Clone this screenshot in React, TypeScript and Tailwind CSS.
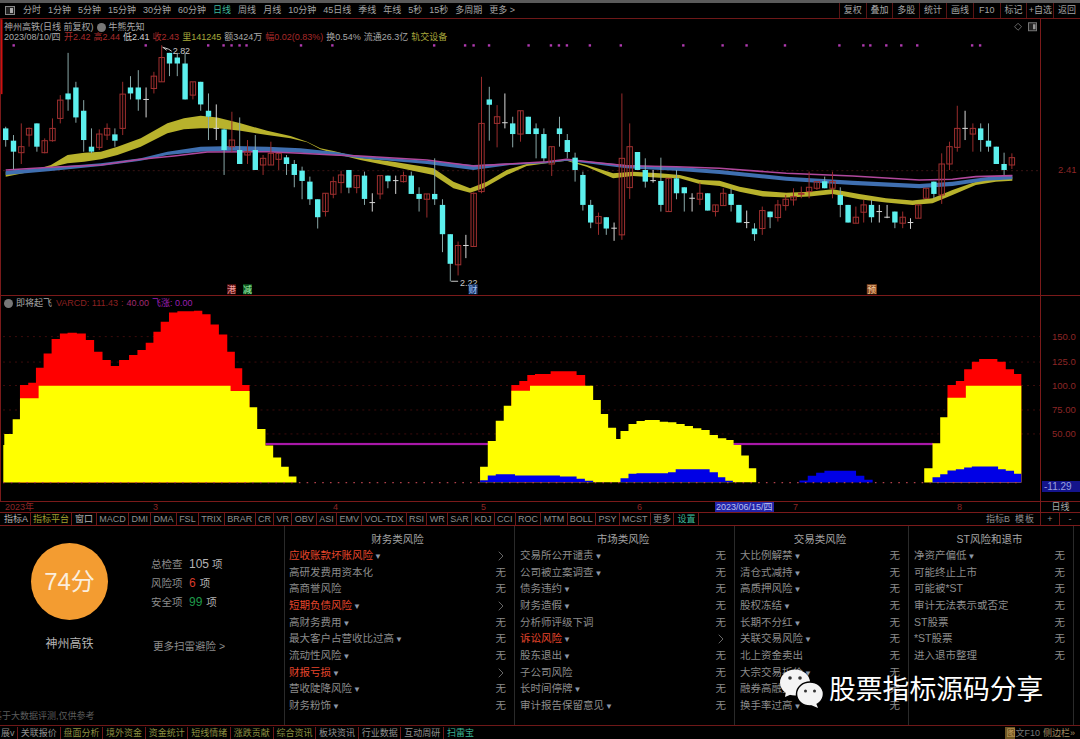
import { ChevronRight } from "lucide-react";

type Candle = [number, number, number, number, "r" | "c" | "w"];
type Point = [number, number];

// read off the chart in 3x crop coordinates, converted when drawn
const candlesLeft: Candle[] = [
  [260, 265, 300, 320, "c"], [285, 302, 335, 388, "c"], [250, 320, 338, 372, "r"], [262, 265, 285, 320, "r"],
  [250, 250, 320, 335, "c"], [295, 302, 338, 340, "r"], [235, 265, 302, 305, "r"], [165, 180, 235, 250, "r"],
  [38, 160, 178, 212, "c"], [125, 142, 232, 248, "c"], [180, 212, 300, 335, "c"], [265, 320, 335, 340, "c"],
  [268, 282, 322, 330, "r"], [250, 265, 285, 300, "r"], [265, 283, 302, 320, "c"], [125, 162, 265, 285, "r"],
  [108, 142, 160, 178, "c"], [90, 142, 178, 212, "c"], [142, 178, 180, 232, "w"], [95, 108, 145, 160, "r"],
  [15, 52, 125, 125, "r"], [38, 38, 70, 108, "c"], [38, 52, 70, 108, "c"], [40, 70, 178, 178, "c"],
  [125, 125, 165, 178, "r"], [125, 125, 193, 212, "c"], [160, 212, 230, 300, "c"], [193, 265, 267, 300, "w"],
  [265, 268, 330, 405, "c"], [215, 300, 320, 335, "r"], [232, 330, 372, 372, "c"], [300, 335, 345, 372, "r"],
  [285, 330, 390, 390, "c"], [345, 355, 375, 405, "r"], [305, 340, 375, 375, "r"], [340, 340, 358, 390, "r"],
  [345, 352, 372, 405, "c"], [360, 372, 405, 442, "c"], [380, 392, 423, 478, "c"], [410, 425, 478, 495, "c"],
  [478, 478, 532, 566, "c"], [460, 460, 515, 530, "r"], [410, 425, 463, 475, "r"], [392, 405, 428, 460, "r"],
  [390, 390, 443, 460, "c"], [405, 407, 443, 460, "r"],
];

const candlesMid: Candle[] = [
  [335, 347, 417, 435, "c"], [400, 428, 430, 455, "w"], [347, 347, 402, 418, "r"], [347, 347, 364, 385, "c"],
  [347, 362, 365, 402, "w"], [335, 347, 365, 368, "r"], [335, 347, 402, 402, "c"], [382, 402, 417, 455, "c"],
  [402, 402, 418, 473, "r"], [295, 402, 418, 435, "c"], [418, 435, 523, 577, "c"], [523, 523, 612, 665, "c"],
  [545, 557, 615, 647, "r"], [525, 557, 560, 595, "w"], [398, 400, 560, 560, "r"], [50, 190, 395, 400, "r"],
  [80, 118, 134, 242, "c"], [135, 170, 190, 262, "r"], [100, 188, 190, 205, "w"], [170, 190, 222, 262, "c"],
  [152, 152, 222, 245, "r"], [170, 170, 222, 222, "c"], [190, 205, 222, 295, "c"], [205, 222, 295, 305, "c"],
  [260, 260, 312, 348, "r"], [170, 205, 222, 260, "c"], [222, 240, 276, 295, "c"], [278, 293, 330, 365, "c"],
  [335, 345, 435, 452, "c"], [420, 435, 488, 505, "c"], [458, 470, 490, 525, "r"], [472, 472, 506, 525, "c"],
  [488, 505, 508, 543, "w"], [100, 295, 525, 540, "r"], [190, 260, 383, 417, "r"], [276, 276, 330, 330, "c"],
  [295, 330, 365, 383, "c"], [330, 362, 365, 368, "w"], [293, 363, 435, 455, "c"], [355, 355, 455, 455, "r"],
  [330, 355, 400, 418, "c"], [382, 382, 400, 455, "c"], [400, 415, 417, 455, "w"], [368, 400, 418, 435, "r"],
  [400, 400, 452, 452, "c"], [435, 435, 455, 470, "r"],
  [385, 400, 437, 437, "r"], [385, 402, 435, 455, "c"], [435, 435, 488, 488, "c"], [452, 488, 490, 505, "w"],
  [490, 506, 523, 543, "c"], [440, 452, 506, 525, "r"], [455, 455, 472, 505, "c"], [420, 435, 473, 485, "r"],
  [405, 418, 437, 452, "r"], [385, 410, 420, 437, "r"], [380, 400, 402, 415, "r"], [335, 382, 395, 415, "r"],
  [365, 365, 385, 390, "r"], [350, 364, 385, 385, "c"], [335, 365, 385, 415, "r"], [382, 405, 435, 472, "c"],
  [435, 435, 488, 488, "c"], [440, 472, 490, 490, "r"], [420, 435, 457, 488, "r"], [420, 435, 472, 488, "c"],
  [435, 455, 457, 488, "w"], [435, 472, 474, 475, "w"], [455, 455, 488, 505, "c"], [455, 472, 490, 505, "r"],
  [475, 488, 490, 507, "w"], [435, 435, 475, 475, "r"], [385, 385, 415, 415, "r"], [365, 365, 402, 415, "c"],
  [280, 312, 405, 432, "r"], [245, 260, 312, 330, "r"], [137, 205, 262, 275, "r"], [152, 205, 207, 240, "w"],
  [190, 205, 222, 275, "r"], [190, 205, 240, 275, "c"], [190, 242, 260, 275, "c"], [260, 260, 312, 312, "c"],
  [278, 312, 330, 345, "c"], [280, 293, 315, 327, "r"],
];

const candles = [
  ...candlesLeft.map((c) => [c, 40] as const),
  ...candlesMid.map((c) => [c, 60] as const),
];

const yellowTop: Point[] = [
  ...toPage(0, 40, [[14, 395], [100, 390], [150, 375], [200, 345], [250, 338], [300, 335], [350, 320], [420, 295], [500, 250], [550, 235], [600, 227], [650, 232], [720, 250], [800, 272], [870, 288], [920, 305], [960, 325], [1000, 333]]),
  ...toPage(360, 60, [[0, 293], [100, 305], [220, 325], [280, 365], [330, 385], [380, 365], [440, 330], [500, 312], [560, 305], [620, 300], [680, 315], [760, 340], [820, 335], [900, 340], [960, 345], [1020, 360]]),
  ...toPage(720, 60, [[0, 362], [60, 380], [130, 393], [200, 398], [270, 395], [340, 388], [420, 402], [500, 415], [580, 422], [640, 415], [700, 390], [770, 365], [830, 355], [880, 350]]),
];
const yellowBottom: Point[] = [
  ...toPage(0, 40, [[14, 410], [100, 393], [150, 382], [200, 370], [250, 365], [300, 358], [350, 345], [420, 320], [500, 280], [550, 268], [600, 265], [650, 265], [720, 272], [800, 285], [870, 295], [920, 307], [960, 328], [1000, 340]]),
  ...toPage(360, 60, [[0, 300], [100, 320], [220, 345], [280, 385], [330, 398], [370, 385], [440, 345], [500, 318], [560, 310], [620, 302], [680, 320], [760, 355], [820, 348], [900, 353], [960, 355], [1020, 372]]),
  ...toPage(720, 60, [[0, 378], [60, 395], [130, 410], [200, 413], [270, 410], [340, 402], [420, 418], [500, 428], [580, 435], [640, 430], [700, 405], [770, 375], [830, 365], [880, 362]]),
];
const blueTop: Point[] = [
  ...toPage(0, 40, [[14, 392], [150, 382], [300, 370], [420, 355], [500, 335], [600, 320], [700, 318], [800, 320], [900, 325], [1000, 335]]),
  ...toPage(360, 60, [[0, 288], [200, 302], [340, 315], [450, 310], [560, 305], [620, 298], [700, 305], [800, 315], [950, 320]]),
  ...toPage(720, 60, [[0, 330], [200, 350], [400, 362], [600, 372], [700, 365], [800, 352], [880, 345]]),
];
const blueBottom: Point[] = [
  ...toPage(0, 40, [[14, 405], [150, 393], [300, 378], [420, 362], [500, 345], [600, 335], [700, 332], [800, 335], [900, 338], [1000, 345]]),
  ...toPage(360, 60, [[0, 295], [200, 312], [340, 330], [450, 315], [560, 310], [620, 302], [700, 312], [800, 325], [950, 332]]),
  ...toPage(720, 60, [[0, 342], [200, 362], [400, 375], [600, 385], [700, 378], [800, 362], [880, 358]]),
];
const magentaLine: Point[] = [
  ...toPage(0, 40, [[14, 390], [150, 382], [300, 375], [420, 358], [520, 348], [620, 336], [800, 335], [900, 340], [1000, 345]]),
  ...toPage(360, 60, [[0, 288], [200, 300], [340, 318], [560, 305], [620, 298], [700, 307], [800, 317], [950, 320]]),
  ...toPage(720, 60, [[0, 325], [200, 340], [400, 348], [600, 360], [700, 358], [770, 350], [880, 347]]),
];

const dots = [12.7, 145, 207.6, 223, 231, 239, 246, 300.6, 332, 434, 465, 473.5, 489, 528.6, 551, 559, 567, 590, 621, 683.6, 723, 747, 785.5, 840, 864, 871, 887, 902, 918, 973, 981];

const hills: { x0: number; y0: number; base: number; color: string; end: number; steps: Point[] }[] = [
  { x0: 0, y0: 290, base: 578, color: "#ff0000", end: 747, steps: [[57, 285], [82, 278], [105, 233], [128, 190], [152, 147], [177, 130], [200, 128], [228, 130], [255, 150], [280, 185], [305, 210], [330, 228], [355, 210], [385, 195], [410, 180], [435, 158], [458, 125], [480, 95], [505, 67], [530, 63], [580, 62], [605, 72], [630, 103], [655, 133], [680, 185], [703, 235], [725, 285]] },
  { x0: 0, y0: 290, base: 578, color: "#ffff00", end: 888, steps: [[7, 465], [10, 432], [35, 388], [57, 325], [113, 287], [690, 303], [747, 352], [770, 417], [795, 467], [818, 503], [842, 531], [865, 560]] },
  { x0: 460, y0: 350, base: 397, color: "#ff0000", end: 376, steps: [[154, 105], [178, 93], [202, 75], [225, 72], [272, 64], [350, 75]] },
  { x0: 460, y0: 350, base: 397, color: "#ffff00", end: 890, steps: [[60, 351], [83, 273], [107, 212], [131, 167], [154, 122], [210, 107], [400, 150], [423, 192], [445, 233], [469, 267], [482, 243], [506, 222], [530, 213], [555, 210], [600, 215], [625, 217], [650, 222], [675, 228], [700, 235], [725, 240], [750, 255], [775, 265], [800, 270], [822, 285], [845, 317], [868, 355]] },
  { x0: 460, y0: 350, base: 397, color: "#0000e6", end: 400, steps: [[60, 391], [83, 377], [107, 373], [165, 377], [300, 380], [350, 387], [375, 393]] },
  { x0: 460, y0: 350, base: 397, color: "#0000e6", end: 820, steps: [[482, 385], [506, 372], [530, 370], [625, 367], [648, 358], [750, 367], [775, 382], [797, 393]] },
  { x0: 800, y0: 290, base: 578, color: "#0000e6", end: 220, steps: [[0, 572], [25, 558], [50, 549], [75, 543], [170, 558], [195, 570]] },
  { x0: 800, y0: 290, base: 578, color: "#ff0000", end: 667, steps: [[445, 285], [470, 273], [495, 238], [518, 215], [540, 207], [595, 215], [620, 238], [645, 252]] },
  { x0: 800, y0: 290, base: 578, color: "#ffff00", end: 667, steps: [[375, 535], [400, 460], [423, 382], [445, 323], [500, 287]] },
  { x0: 800, y0: 290, base: 578, color: "#0000e6", end: 667, steps: [[400, 562], [423, 553], [445, 542], [470, 538], [495, 533], [518, 530], [597, 538], [620, 543], [645, 552]] },
];

const periods = ["分时", "1分钟", "5分钟", "15分钟", "30分钟", "60分钟", "日线", "周线", "月线", "10分钟", "45日线", "季线", "年线", "5秒", "15秒", "多周期", "更多 >"];
const actions = ["复权", "叠加", "多股", "统计", "画线", "F10", "标记", "+自选", "返回"];
const indicatorTabs = ["MACD", "DMI", "DMA", "FSL", "TRIX", "BRAR", "CR", "VR", "OBV", "ASI", "EMV", "VOL-TDX", "RSI", "WR", "SAR", "KDJ", "CCI", "ROC", "MTM", "BOLL", "PSY", "MCST", "更多"];
const bottomTabs = ["关联报价", "盘面分析", "境外资金", "资金统计", "短线情绪", "涨跌贡献", "综合资讯", "板块资讯", "行业数据", "互动周研"];

type Risk = { name: string; more?: boolean; hit?: boolean };

const riskColumns: { title: string; width: string; items: Risk[] }[] = [
  {
    title: "财务类风险",
    width: "w-[230px] pl-[4px]",
    items: [
      { name: "应收账款坏账风险", more: true, hit: true },
      { name: "高研发费用资本化" },
      { name: "高商誉风险" },
      { name: "短期负债风险", more: true, hit: true },
      { name: "高财务费用", more: true },
      { name: "最大客户占营收比过高", more: true },
      { name: "流动性风险", more: true },
      { name: "财报亏损", more: true, hit: true },
      { name: "营收陡降风险", more: true },
      { name: "财务粉饰", more: true },
    ],
  },
  {
    title: "市场类风险",
    width: "w-[220px] pl-[5px]",
    items: [
      { name: "交易所公开谴责", more: true },
      { name: "公司被立案调查", more: true },
      { name: "债务违约", more: true },
      { name: "财务造假", more: true },
      { name: "分析师评级下调" },
      { name: "诉讼风险", more: true, hit: true },
      { name: "股东退出", more: true },
      { name: "子公司风险" },
      { name: "长时间停牌", more: true },
      { name: "审计报告保留意见", more: true },
    ],
  },
  {
    title: "交易类风险",
    width: "w-[174px] pl-[5px]",
    items: [
      { name: "大比例解禁", more: true },
      { name: "清仓式减持", more: true },
      { name: "高质押风险", more: true },
      { name: "股权冻结", more: true },
      { name: "长期不分红", more: true },
      { name: "关联交易风险", more: true },
      { name: "北上资金卖出" },
      { name: "大宗交易折价", more: true },
      { name: "融券高融资", more: true },
      { name: "换手率过高", more: true },
    ],
  },
  {
    title: "ST风险和退市",
    width: "w-[165px] pl-[5px]",
    items: [
      { name: "净资产偏低", more: true },
      { name: "可能终止上市" },
      { name: "可能被*ST" },
      { name: "审计无法表示或否定" },
      { name: "ST股票" },
      { name: "*ST股票" },
      { name: "进入退市整理" },
    ],
  },
];

function toPage(x0: number, y0: number, points: Point[]): Point[] {
  return points.map(([x, y]) => [x0 + x / 3, y0 + y / 3]);
}

function band(top: Point[], bottom: Point[]) {
  return [...top, ...[...bottom].reverse()].map(([x, y]) => `${x.toFixed(1)},${y.toFixed(1)}`).join(" ");
}

function line(points: Point[]) {
  return points.map(([x, y]) => `${x.toFixed(1)},${y.toFixed(1)}`).join(" ");
}

function hillPath(hill: (typeof hills)[number]) {
  const px = (x: number) => (hill.x0 + x / 3).toFixed(1);
  const py = (y: number) => (hill.y0 + y / 3).toFixed(1);
  let d = `M${px(hill.steps[0][0])} ${py(hill.base)}`;
  hill.steps.forEach(([x, y], index) => {
    const next = index + 1 < hill.steps.length ? hill.steps[index + 1][0] : hill.end;
    d += `L${px(x)} ${py(y)}L${px(next)} ${py(y)}`;
  });
  return `${d}L${px(hill.end)} ${py(hill.base)}Z`;
}

function PriceChart() {
  return (
    <svg viewBox="0 19 1041 276" className="absolute inset-0 h-full w-full">
      <rect x="0" y="19" width="1.5" height="75" fill="#d01010" />
      <line x1="2" x2="1041" y1="170.7" y2="170.7" stroke="#3a1414" strokeDasharray="2 3" />
      {dots.map((x) => (
        <rect key={x} x={x - 1.2} y="44" width="2.4" height="2.4" fill="#b03ab0" />
      ))}
      <polygon points={band(yellowTop, yellowBottom)} fill="#b8b22c" />
      <polygon points={band(blueTop, blueBottom)} fill="#3f6fb0" />
      <polyline points={line(magentaLine)} fill="none" stroke="#b0489c" strokeWidth="1.6" />
      {candles.map(([[high, top, bottom, low, kind], y0], index) => {
        const x = 4.7 + 7.815 * index;
        const wick = kind === "r" ? "#9a2c2c" : kind === "c" ? "#8aa8a8" : "#d8d8d8";
        const y = (value: number) => y0 + value / 3;
        return (
          <g key={index}>
            <line x1={x} x2={x} y1={y(high)} y2={y(low)} stroke={wick} strokeWidth="1" />
            {kind === "w" ? (
              <line x1={x - 2.8} x2={x + 2.8} y1={y(top)} y2={y(top)} stroke={wick} />
            ) : (
              <rect
                x={x - 2.7}
                y={y(top)}
                width="5.4"
                height={Math.max((bottom - top) / 3, 1)}
                fill={kind === "c" ? "#5cf0ee" : "#000000"}
                stroke={kind === "c" ? "none" : "#a03030"}
                fillOpacity={kind === "c" ? 1 : 0}
              />
            )}
          </g>
        );
      })}
      <polyline points="166,50 162,47 168,49 171,51" fill="none" stroke="#c8c8c8" />
      <text x="172" y="54" fontSize="9" fill="#c8c8c8">2.82</text>
      <line x1="451" x2="458" y1="281.5" y2="281.5" stroke="#c8c8c8" />
      <text x="460" y="286" fontSize="9" fill="#c8c8c8">2.22</text>
      <rect x="226.5" y="284.5" width="9" height="10" fill="#5a1010" />
      <text x="231" y="293" fontSize="9" fill="#f0a0a0" textAnchor="middle">港</text>
      <rect x="242.5" y="284.5" width="9" height="10" fill="#105a20" />
      <text x="247" y="293" fontSize="9" fill="#a0f0b0" textAnchor="middle">减</text>
      <rect x="468.5" y="284.5" width="9" height="10" fill="#1c3a70" />
      <text x="473" y="293" fontSize="9" fill="#a0c0f0" textAnchor="middle">财</text>
      <rect x="867.5" y="284.5" width="10" height="10" fill="#8a4a20" />
      <text x="872.5" y="293" fontSize="9" fill="#f8d0a0" textAnchor="middle">预</text>
      <path d="M1019 23l3.5 3.5-3.5 3.5-3.5-3.5z" fill="none" stroke="#666" />
      <rect x="1029.5" y="22.5" width="8" height="8" fill="#222" stroke="#777" />
      <rect x="1034" y="24" width="2.5" height="5" fill="#999" />
    </svg>
  );
}

function IndicatorChart() {
  return (
    <svg viewBox="0 296 1041 205" className="absolute inset-0 h-full w-full">
      {[336.5, 362, 385.5, 410, 434].map((y) => (
        <line key={y} x1="2" x2="1041" y1={y} y2={y} stroke="#3c0c0c" strokeDasharray="2 4" />
      ))}
      <rect x="265" y="443" width="669" height="2.2" fill="#a818a8" />
      {hills.map((hill, index) => (
        <path key={index} d={hillPath(hill)} fill={hill.color} />
      ))}
      <line x1="2" x2="1022" y1="482.7" y2="482.7" stroke="#b0404a" strokeWidth="1.2" strokeDasharray="1.6 6.2" />
    </svg>
  );
}

function Toolbar() {
  return (
    <div className="flex h-[16px] shrink-0 items-center border-b border-[#6e1818] text-[9px] leading-none text-[#a4a4a4]">
      <div className="ml-[5px] mr-[8px] flex h-[9px] w-[10px] justify-end border border-[#888] bg-[#222] p-px">
        <div className="w-[3px] bg-[#aaa]" />
      </div>
      <div className="flex items-center gap-[7px]">
        {periods.map((period) => (
          <span key={period} className={period === "日线" ? "text-[#3cb89a]" : ""}>
            {period}
          </span>
        ))}
      </div>
      <div className="ml-auto flex h-full">
        {actions.map((action) => (
          <span key={action} className="flex w-[26.8px] items-center justify-center border-l border-[#5a1414]">
            {action}
          </span>
        ))}
      </div>
    </div>
  );
}

function ChartHeader() {
  return (
    <div className="relative pl-[3px] pt-[3px] text-[9px] leading-[11px]">
      <div className="flex items-center text-[#a8a8a8]">
        <span>神州高铁(日线 前复权)</span>
        <span className="ml-[3px] mr-[3px] h-[9px] w-[9px] rounded-full bg-[#777]" />
        <span>牛熊先知</span>
      </div>
      <div className="mt-[-1px] flex gap-[3px] whitespace-nowrap text-[#a8a8a8]">
        <span className="w-[57px]">2023/08/10/四</span>
        <span className="text-[#a82a2a]">开2.42</span>
        <span className="text-[#a82a2a]">高2.44</span>
        <span className="text-[#d0d0d0]">低2.41</span>
        <span className="text-[#a82a2a]">收2.43</span>
        <span className="text-[#a8a83c]">里141245</span>
        <span>额3424万</span>
        <span className="text-[#a82a2a]">幅0.02(0.83%)</span>
        <span>换0.54%</span>
        <span>流通26.3亿</span>
        <span className="text-[#a8a83c]">轨交设备</span>
      </div>
    </div>
  );
}

function DateAxis() {
  const ticks = [
    { label: "3", x: "left-[153px]" },
    { label: "4", x: "left-[333px]" },
    { label: "5", x: "left-[481px]" },
    { label: "6", x: "left-[637px]" },
    { label: "7", x: "left-[793px]" },
    { label: "8", x: "left-[957px]" },
  ];
  return (
    <div className="flex h-[12px] shrink-0 border-y border-[#7a1a1a] text-[9px] leading-[10px]">
      <div className="relative w-[1041px] border-r border-[#7a1a1a] text-[#8c2626]">
        <span className="absolute left-[5px] top-0">2023年</span>
        {ticks.map((tick) => (
          <span key={tick.label} className={`absolute top-0 ${tick.x}`}>
            {tick.label}
          </span>
        ))}
        <span className="absolute left-[715px] top-0 bg-[#2323a8] px-px text-[#b8c0f0]">2023/06/15/四</span>
      </div>
      <div className="flex-1 text-center text-[#a8a8a8]">日线</div>
    </div>
  );
}

function TabRow() {
  return (
    <div className="flex h-[13px] shrink-0 items-stretch border-b border-[#7a1a1a] text-[9px] leading-[12px] text-[#8f8f8f]">
      <span className="border-r border-[#6e1818] pl-[4px] pr-[2px] text-[#b4b4b4]">指标A</span>
      <span className="border-r border-[#6e1818] px-[2px] text-[#a0a030]">指标平台</span>
      <span className="border-r border-[#6e1818] px-[3px] text-[#b4b4b4]">窗口</span>
      {indicatorTabs.map((tab) => (
        <span key={tab} className="border-r border-[#6e1818] px-[2.3px]">
          {tab}
        </span>
      ))}
      <span className="border-r border-[#6e1818] px-[3px] text-[#3cb89a]">设置</span>
      <span className="ml-auto px-[3px]">指标B</span>
      <span className="w-[28px] border-r border-[#6e1818] pl-[2px] tracking-[1px]">模板</span>
      <span className="flex w-[19px] justify-center border-r border-[#6e1818]">+</span>
      <span className="flex w-[20px] justify-center">-</span>
    </div>
  );
}

function ScorePanel() {
  return (
    <div className="relative w-[285px] shrink-0 border-r border-[#2a2a2a] text-[#8c8c8c]">
      <div className="flex">
        <div className="ml-[31px] mt-[17px] flex w-[77px] flex-col items-center">
          <div className="flex h-[77px] w-[77px] items-center justify-center rounded-full bg-[#f39c31] text-[24px] text-[#fbeedd]">
            74分
          </div>
          <div className="mt-[16px] text-[12px] leading-[16px] text-[#b4b4b4]">神州高铁</div>
        </div>
        <div className="ml-[43px] mt-[29px] text-[10.5px] leading-[19px]">
          <div className="flex items-center">
            <span className="w-[38px]">总检查</span>
            <span className="text-[12px] text-[#b4b4b4]">105</span>
            <span className="ml-[3px] text-[#b4b4b4]">项</span>
          </div>
          <div className="flex items-center">
            <span className="w-[38px]">风险项</span>
            <span className="text-[12px] text-[#d83a2a]">6</span>
            <span className="ml-[4px] text-[#b4b4b4]">项</span>
          </div>
          <div className="flex items-center">
            <span className="w-[38px]">安全项</span>
            <span className="text-[12px] text-[#1f9a4a]">99</span>
            <span className="ml-[4px] text-[#b4b4b4]">项</span>
          </div>
          <div className="ml-[2px] mt-[25px] whitespace-nowrap">更多扫雷避险 &gt;</div>
        </div>
      </div>
      <div className="absolute bottom-[4px] left-[-7px] whitespace-nowrap text-[9px] leading-[10px] text-[#5c5c5c]">
        基于大数据评测,仅供参考
      </div>
    </div>
  );
}

function RiskColumn({ title, width, items }: (typeof riskColumns)[number]) {
  return (
    <div className={`${width} shrink-0 border-r border-[#2a2a2a] pr-[8px]`}>
      <div className="h-[20px] pt-[6px] text-center text-[10.5px] leading-[15px] text-[#a4a4a4]">{title}</div>
      <div className="pt-[1.5px]">
        {items.map((item) => (
          <div key={item.name} className="flex h-[16.7px] items-center justify-between text-[10.5px]">
            <span className={item.hit ? "text-[#e8462c]" : "text-[#8c8c8c]"}>
              {item.name}
              {item.more ? <span className="ml-px text-[8px] text-[#8c98a8]">▼</span> : null}
            </span>
            {item.hit ? (
              <ChevronRight className="mr-[-3px] h-[16px] w-[16px] text-[#9a9a9a]" strokeWidth={1} />
            ) : (
              <span className="text-[#8c8c8c]">无</span>
            )}
          </div>
        ))}
      </div>
    </div>
  );
}

function BottomBar() {
  return (
    <div className="flex h-[14px] shrink-0 items-center border-t border-[#6e1818] text-[9px] leading-[12px] text-[#8f8f8f]">
      <span className="w-[18px] border-r border-[#6e1818] pl-px">展v</span>
      {bottomTabs.map((tab, index) => (
        <span
          key={tab}
          className={`border-r border-[#6e1818] px-[2.8px] ${index >= 1 && index <= 6 ? "text-[#8c9040]" : ""}`}
        >
          {tab}
        </span>
      ))}
      <span className="px-[3px] text-[#3cb89a]">扫雷宝</span>
      <span className="ml-auto bg-[#6e5420] pl-px text-[#c8a060]">图</span>
      <span className="text-[#777]">文F10</span>
      <span className="ml-[3px] mr-[5px] text-[#a08c60]">侧边栏»</span>
    </div>
  );
}

function Watermark() {
  return (
    <div className="absolute left-[780px] top-[668px] flex items-center gap-[5px]">
      <svg viewBox="0 0 44 40" className="h-[40px] w-[44px]">
        <ellipse cx="15" cy="14.5" rx="15" ry="13" fill="#f4f4f4" />
        <path d="M6 23l-1 6 7-3z" fill="#f4f4f4" />
        <ellipse cx="30" cy="26" rx="13.5" ry="12" fill="#f4f4f4" stroke="#000" strokeWidth="1.5" />
        <path d="M36 35l2 5-7-3z" fill="#f4f4f4" />
        <circle cx="10" cy="10" r="1.8" fill="#333" />
        <circle cx="20" cy="10" r="1.8" fill="#333" />
        <circle cx="25.5" cy="23" r="1.5" fill="#333" />
        <circle cx="34.5" cy="23" r="1.5" fill="#333" />
      </svg>
      <span className="mt-[5px] whitespace-nowrap text-[26.8px] leading-none text-white">股票指标源码分享</span>
    </div>
  );
}

export default function App() {
  return (
    <div className="relative flex h-[739px] w-[1080px] flex-col overflow-hidden bg-black font-['Liberation_Sans','Noto_Sans_CJK_SC',sans-serif]">
      <div className="h-[3px] shrink-0 bg-[#5a5a5a]" />
      <Toolbar />

      <div className="flex h-[277px] shrink-0 border-b border-[#7a1a1a]">
        <div className="relative w-[1041px] border-x border-[#7a1a1a]">
          <PriceChart />
          <ChartHeader />
        </div>
        <div className="relative flex-1 text-[9.5px] leading-none text-[#8c2626]">
          <span className="absolute left-[17px] top-[146px]">2.41</span>
        </div>
      </div>

      <div className="flex h-[205px] shrink-0">
        <div className="relative w-[1041px] border-x border-[#7a1a1a]">
          <IndicatorChart />
          <div className="relative flex items-center gap-[3px] pl-[3px] pt-[2px] text-[9px] leading-[11px]">
            <span className="h-[9px] w-[9px] rounded-full bg-[#777]" />
            <span className="mr-[1px] text-[#a8a8a8]">即将起飞</span>
            <span className="text-[#8c2020]">VARCD: 111.43</span>
            <span className="text-[#8c2020]">:</span>
            <span className="text-[#a02a70]">40.00</span>
            <span className="text-[#9a1fb0]">飞涨: 0.00</span>
          </div>
        </div>
        <div className="relative flex-1 text-[9.5px] leading-none text-[#8c2626]">
          <span className="absolute left-[11px] top-[36px]">150.0</span>
          <span className="absolute left-[11px] top-[61px]">125.0</span>
          <span className="absolute left-[11px] top-[85px]">100.0</span>
          <span className="absolute left-[11px] top-[109px]">75.00</span>
          <span className="absolute left-[11px] top-[133px]">50.00</span>
          <span className="absolute bottom-[9px] left-px right-0 bg-[#14148c] pl-[2px] text-[10px] leading-[11px] text-[#98a0e0]">
            -11.29
          </span>
        </div>
      </div>

      <DateAxis />
      <TabRow />

      <div className="flex h-[199px] shrink-0">
        <ScorePanel />
        {riskColumns.map((column) => (
          <RiskColumn key={column.title} {...column} />
        ))}
      </div>

      <BottomBar />
      <Watermark />
    </div>
  );
}
